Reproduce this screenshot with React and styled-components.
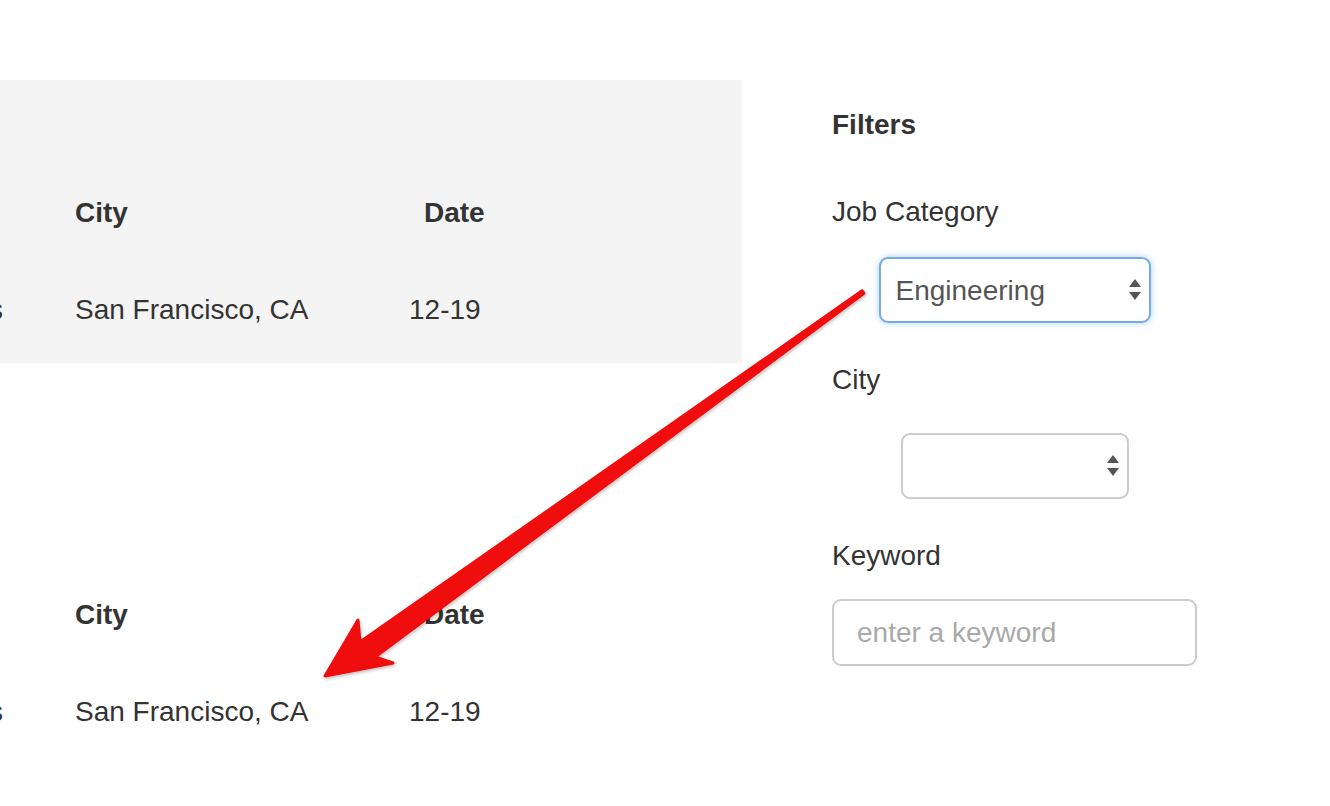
import styled, { createGlobalStyle } from "styled-components"

const GlobalStyle = createGlobalStyle`
  html, body {
    margin: 0;
    padding: 0;
    background: #fff;
  }
  body {
    font-family: "Liberation Sans", Arial, sans-serif;
    color: #333;
    overflow: hidden;
  }
  * {
    box-sizing: border-box;
  }
`

const Page = styled.div`
  position: relative;
  display: flex;
  align-items: flex-start;
  width: 1330px;
  height: 806px;
  padding-top: 80px;
  overflow: hidden;
`

const Listings = styled.main`
  width: 742px;
  flex-shrink: 0;
  display: flex;
  flex-direction: column;
  gap: 119px;
`

const JobTable = styled.div`
  display: grid;
  grid-template-columns: 75px 334px 1fr;
  grid-auto-rows: 40px;
  row-gap: 57px;
  padding: 113px 0 33px;
  background: ${p => (p.$shaded ? "#f4f4f4" : "transparent")};
  font-size: 28px;
  line-height: 40px;
`

const Cell = styled.div`
  white-space: nowrap;
  font-weight: ${p => (p.$head ? 700 : 400)};
  padding-left: ${p => p.$indent || 0}px;
`

const ClippedCell = styled.div`
  display: flex;
  justify-content: flex-end;
  padding-right: 72px;
  white-space: nowrap;
`

const Sidebar = styled.aside`
  margin-left: 90px;
  width: 365px;
  padding-top: 25px;
  display: flex;
  flex-direction: column;
  font-size: 28px;
  line-height: 40px;
`

const Heading = styled.h4`
  margin: 0 0 47px;
  font-size: 28px;
  line-height: 40px;
  font-weight: 700;
`

const Label = styled.label`
  display: block;
  margin-bottom: ${p => p.$gap}px;
`

const SelectWrap = styled.div`
  position: relative;
  align-self: center;
  width: ${p => p.$width}px;
  height: 66px;
  margin-bottom: 37px;
`

const Select = styled.select`
  appearance: none;
  -webkit-appearance: none;
  width: 100%;
  height: 100%;
  margin: 0;
  padding: 0 40px 0 15px;
  background: #fff;
  border: 2px solid ${p => (p.$focus ? "#74aae6" : "#cbcbcb")};
  border-radius: 9px;
  box-shadow: ${p => (p.$focus ? "0 0 7px rgba(102, 175, 233, 0.55)" : "none")};
  font-family: inherit;
  font-size: 28px;
  color: #555;
  outline: none;
`

const Carets = styled.svg`
  position: absolute;
  right: 9px;
  top: 50%;
  transform: translateY(-50%);
  pointer-events: none;
`

const KeywordInput = styled.input`
  width: 100%;
  height: 67px;
  margin: 0;
  padding: 0 0 0 23px;
  border: 2px solid #cbcbcb;
  border-radius: 9px;
  font-family: inherit;
  font-size: 28px;
  color: #555;
  outline: none;

  &::placeholder {
    color: #a9a9a9;
  }
`

const Overlay = styled.svg`
  position: absolute;
  top: 0;
  left: 0;
  pointer-events: none;
`

const SelectCarets = () => (
  <Carets width="14" height="24" viewBox="0 0 14 24">
    <polygon points="1,9 7,1 13,9" fill="#555" />
    <polygon points="1,14 13,14 7,22" fill="#555" />
  </Carets>
)

const rows = [
  { title: "Engineers", city: "San Francisco, CA", date: "12-19" }
]

const Table = ({ shaded }) => (
  <JobTable $shaded={shaded}>
    <Cell $head />
    <Cell $head>City</Cell>
    <Cell $head $indent={15}>Date</Cell>
    {rows.map(row => (
      <>
        <ClippedCell>{row.title}</ClippedCell>
        <Cell>{row.city}</Cell>
        <Cell>{row.date}</Cell>
      </>
    ))}
  </JobTable>
)

const Arrow = () => (
  <Overlay width="1330" height="806" viewBox="0 0 1330 806">
    <defs>
      <linearGradient id="arrowRed" x1="0" y1="0" x2="1" y2="1">
        <stop offset="0" stopColor="#ff1010" />
        <stop offset="1" stopColor="#e00000" />
      </linearGradient>
      <filter id="arrowShadow" x="-10%" y="-10%" width="120%" height="120%">
        <feDropShadow dx="1" dy="2" stdDeviation="1.5" floodColor="#000" floodOpacity="0.22" />
      </filter>
    </defs>
    <polygon
      points="862.1,290.8 863.9,293.2 375,657 393,663 325,676 358,620 360,642"
      fill="url(#arrowRed)"
      stroke="url(#arrowRed)"
      strokeWidth="3"
      strokeLinejoin="round"
      filter="url(#arrowShadow)"
    />
  </Overlay>
)

export default function App() {
  return (
    <>
      <GlobalStyle />
      <Page>
        <Listings>
          <Table shaded />
          <Table />
        </Listings>
        <Sidebar>
          <Heading>Filters</Heading>
          <Label $gap={25}>Job Category</Label>
          <SelectWrap $width={272}>
            <Select $focus defaultValue="Engineering">
              <option>Engineering</option>
              <option>Design</option>
              <option>Marketing</option>
            </Select>
            <SelectCarets />
          </SelectWrap>
          <Label $gap={33}>City</Label>
          <SelectWrap $width={228}>
            <Select defaultValue="">
              <option value=""></option>
              <option>San Francisco, CA</option>
            </Select>
            <SelectCarets />
          </SelectWrap>
          <Label $gap={23}>Keyword</Label>
          <KeywordInput type="text" placeholder="enter a keyword" />
        </Sidebar>
        <Arrow />
      </Page>
    </>
  )
}
